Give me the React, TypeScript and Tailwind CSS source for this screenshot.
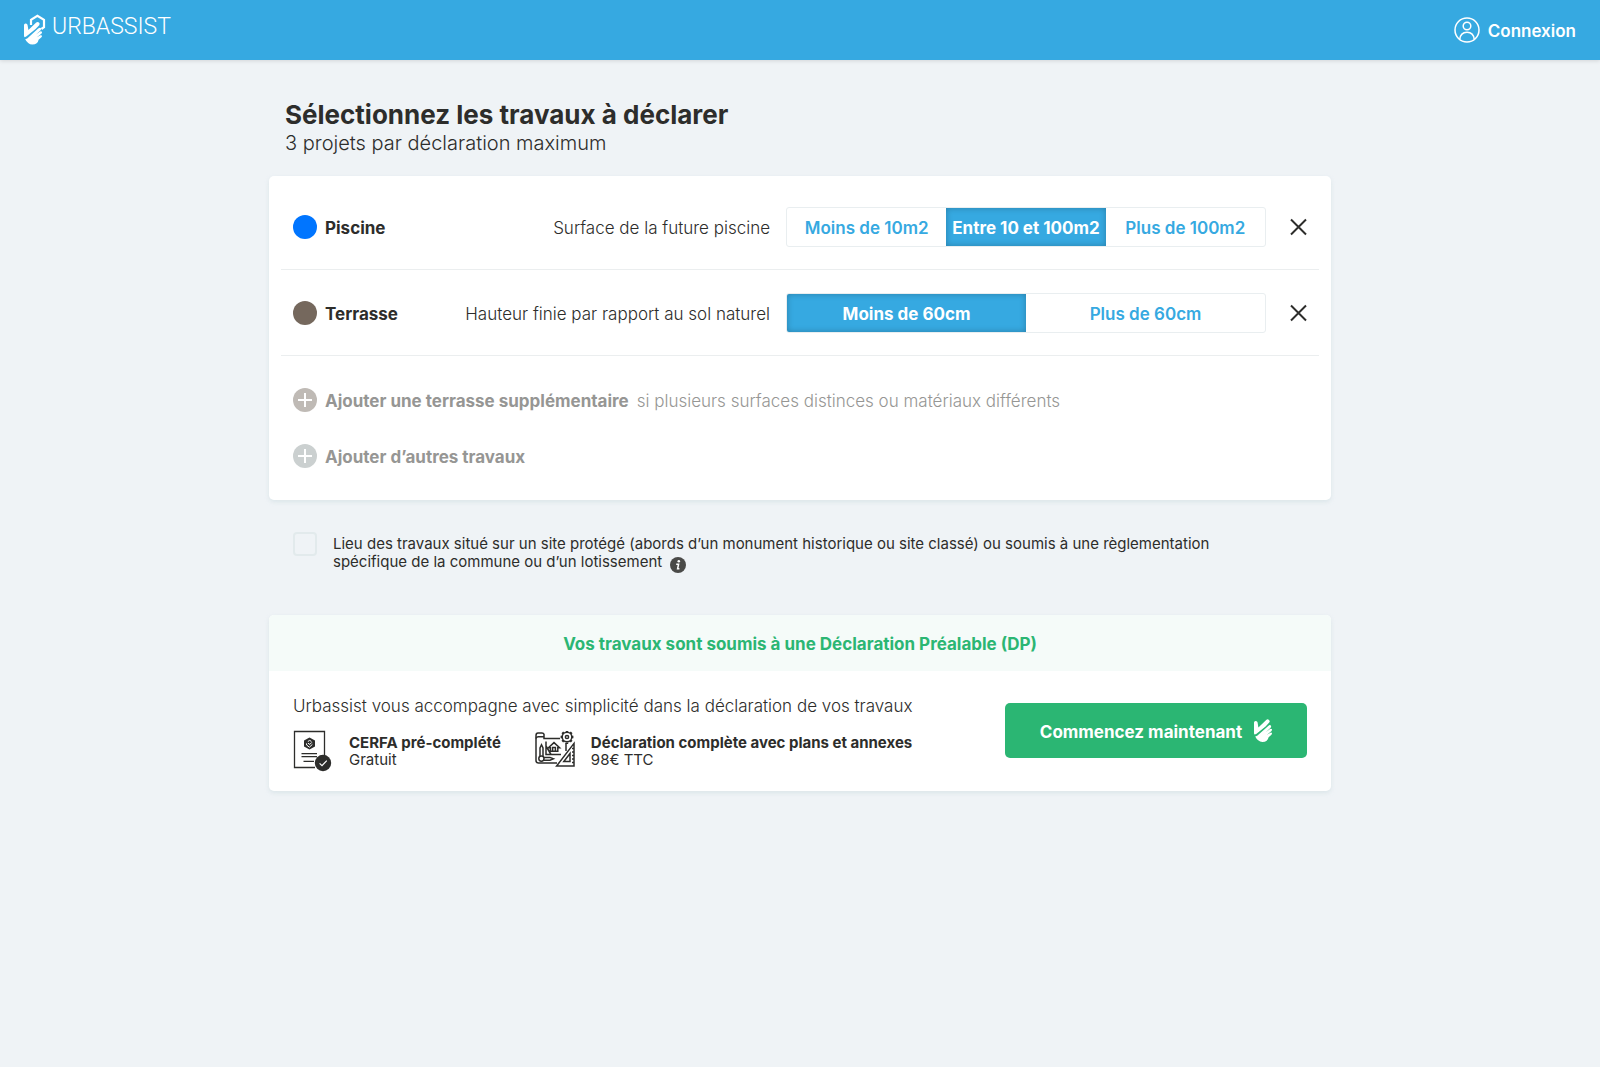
import React, { useState } from 'react';

type Project = {
  name: string;
  color: string;
  question: string;
  options: string[];
};

const PROJECTS: Project[] = [
  {
    name: 'Piscine',
    color: 'bg-[#0075ff]',
    question: 'Surface de la future piscine',
    options: ['Moins de 10m2', 'Entre 10 et 100m2', 'Plus de 100m2'],
  },
  {
    name: 'Terrasse',
    color: 'bg-[#75685d]',
    question: 'Hauteur finie par rapport au sol naturel',
    options: ['Moins de 60cm', 'Plus de 60cm'],
  },
];

const HandShape: React.FC = () => (
  <>
    <path d="M0 3.4Q0 1.8 1.8 1.9Q3.4 2 3.6 3.6L4.4 8.4L12.2.9Q13.6-.3 15 .9Q16.3 2.3 15.2 3.6L11.6 7.4L2.2 15L.6 15.6Q0 15 0 14Z" />
    <path d="M1.2 17.6L3.2 16.8L14.2 7Q15.8 5.5 16.8 6.5Q17.6 7.5 16.6 8.7L12 13L16 9.9Q17.4 9.2 18 10.3Q18.2 11.4 17.3 12.2L12.6 16L16.4 13.7Q17.6 13.3 18 14.2Q18.1 15.2 17.2 16L14.6 18.2Q13.8 22.8 8.4 23Q3.6 22.6 1.2 17.6Z" />
  </>
);

const LogoMark: React.FC = () => (
  <svg width="22" height="31" viewBox="0 0 22 31" fill="white" aria-hidden="true">
    <path d="M7 11V5.8L13.4 1.8L20 5.8V13.2L17.4 15" fill="none" stroke="white" strokeWidth="2.2" />
    <g transform="translate(0 7.6)">
      <HandShape />
    </g>
  </svg>
);

const UserIcon: React.FC = () => (
  <svg width="26" height="26" viewBox="0 0 26 26" fill="none" stroke="white" strokeWidth="1.5" aria-hidden="true">
    <circle cx="13" cy="13" r="12" />
    <circle cx="13" cy="9" r="3.8" />
    <path d="M5.8 22.4C6.2 17.6 9 15.2 13 15.2S19.8 17.6 20.2 22.4" />
  </svg>
);

const PlusCircle: React.FC<{ color: string }> = ({ color }) => (
  <svg width="24" height="24" viewBox="0 0 24 24" className={`shrink-0 ${color}`} aria-hidden="true">
    <circle cx="12" cy="12" r="12" fill="currentColor" />
    <path d="M12 5V19M5 12H19" stroke="white" strokeWidth="2" />
  </svg>
);

const CerfaIcon: React.FC = () => (
  <svg width="40" height="42" viewBox="0 0 40 42" fill="none" stroke="#2d2d2b" className="shrink-0" aria-hidden="true">
    <path d="M31.5 25V1.5H1.5V37.5H22" strokeWidth="1.3" />
    <path d="M16.5 7.5L22 10.4V16.4L16.5 19.5L11 16.4V10.4Z" fill="#2d2d2b" stroke="none" />
    <path d="M13.6 13.4V15L16.4 17.2L19.4 14.4M15 13.2L16.8 14.4L18.8 12.4M14.8 11.6L16.6 10.4L18.4 11.4" stroke="white" strokeWidth="1" />
    <path d="M8.5 23.6H24M8.5 26.6H24M10.5 31.4H21" strokeWidth="1.3" />
    <circle cx="30" cy="33" r="8.2" fill="#2d2d2b" stroke="none" />
    <path d="M26.6 33.4L29 35.6L33.8 30.6" stroke="white" strokeWidth="1.2" />
  </svg>
);

const PlansIcon: React.FC = () => (
  <svg width="40" height="38" viewBox="0 0 40 38" fill="none" stroke="#2d2d2b" strokeWidth="1.5" className="shrink-0" aria-hidden="true">
    <path d="M25 8.5H9V4.2Q8.6 3 7 3H3Q1 3 1 5.4V30.6Q1 33 3.4 33H22" />
    <path d="M1 8.5Q1.4 6.8 3.4 6.8H9M31 13V21" />
    <path d="M32 2.6V1M32 12.4V14M27 7H25.6M38.4 7H37M28.4 3.4L27.3 2.3M35.6 3.4L36.7 2.3M28.4 10.6L27.3 11.7M35.6 10.6L36.7 11.7" strokeWidth="2.4" />
    <circle cx="32" cy="7" r="4.8" />
    <circle cx="32" cy="7" r="1.6" />
    <path d="M39 13.4V36H21.6Z" />
    <path d="M35 23.5V31.6H28.8ZM39 18.5H37M39 22H37M39 25.5H37M39 29H37M39 32.5H37" />
    <path d="M13.4 17.8L19 12.6L24.6 17.8H22.8V21.2H15.4V17.8ZM17.6 21V17.6H20.4V21M11 11.5V24.5H26M11 16L16 24.5" />
    <path d="M5 26V18L6.5 14.8L8 18V26M9 27.4H15L18.4 28.8L15 30.2H9" />
    <circle cx="6.4" cy="28.6" r="2.6" />
  </svg>
);

const ProjectRow: React.FC<{
  project: Project;
  selected: number;
  onSelect: (index: number) => void;
}> = ({ project, selected, onSelect }) => (
  <div className="mx-3 flex items-center border-b border-[#ebeeef] px-3 pt-[23px] pb-[22px]">
    <span className={`size-6 shrink-0 rounded-full ${project.color}`} />
    <span className="ml-2 pt-0.5 text-[17px] leading-6 font-bold">{project.name}</span>
    <span className="ml-auto pt-0.5 pl-4 text-right text-[17px] leading-6 font-light">{project.question}</span>
    <div
      role="group"
      aria-label={project.question}
      className="ml-4 flex h-10 w-[480px] shrink-0 overflow-hidden rounded-[3px] border border-[#e9eef0]"
    >
      {project.options.map((option, i) => (
        <button
          key={option}
          type="button"
          aria-pressed={selected === i}
          onClick={() => onSelect(i)}
          className={`flex-1 basis-0 pt-0.5 text-[17px] leading-6 whitespace-nowrap ${
            selected === i
              ? 'bg-[#36a9e1] font-bold text-white shadow-[inset_0_0_6px_rgba(0,0,0,0.25)]'
              : 'font-semibold text-[#36a9e1]'
          }`}
        >
          {option}
        </button>
      ))}
    </div>
    <button type="button" aria-label={`Supprimer ${project.name}`} className="ml-6 shrink-0">
      <svg width="17" height="18" viewBox="0 0 17 18" stroke="#2d2d2b" strokeWidth="2" aria-hidden="true">
        <path d="M1 1.5L16 16.5M16 1.5L1 16.5" />
      </svg>
    </button>
  </div>
);

const App: React.FC = () => {
  const [choices, setChoices] = useState<number[]>([1, 0]);
  const [isProtected, setIsProtected] = useState(false);

  return (
    <div className="min-h-screen bg-[#eff3f6] font-['Inter',sans-serif] text-[#2d2d2b]">
      <header className="flex h-[60px] items-center justify-between bg-[#36a9e1] px-6 shadow-[0_1px_4px_rgba(0,0,0,0.12)]">
        <a href="#" className="flex items-center gap-[6px] pb-0.5 text-white">
          <LogoMark />
          <span className="pb-1 font-['Roboto',sans-serif] text-[23px] leading-7 font-light">URBASSIST</span>
        </a>
        <a href="#" className="flex items-center gap-2 text-[17px] leading-6 font-semibold text-white">
          <UserIcon />
          <span className="pt-0.5">Connexion</span>
        </a>
      </header>

      <main className="mx-auto max-w-[1062px] pt-10 pb-10">
        <div className="px-4">
          <h1 className="text-[26px] leading-[30px] font-bold">Sélectionnez les travaux à déclarer</h1>
          <p className="text-[20px] leading-[26px] font-light">3 projets par déclaration maximum</p>
        </div>

        <section className="mt-5 rounded-[5px] bg-white pt-2 pb-4 shadow-[0_2px_4px_rgba(190,210,216,0.4)]">
          {PROJECTS.map((project, i) => (
            <ProjectRow
              key={project.name}
              project={project}
              selected={choices[i]}
              onSelect={(index) => setChoices(prev => prev.map((c, j) => (j === i ? index : c)))}
            />
          ))}
          <div className="flex flex-col items-start gap-8 px-6 pt-8 pb-4 text-[17px] leading-6 text-[#969694]">
            <button type="button" className="flex h-6 items-center">
              <PlusCircle color="text-[#bfbab5]" />
              <span className="ml-2 pt-0.5 font-bold">Ajouter une terrasse supplémentaire</span>
              <span className="ml-2 pt-0.5 font-light">si plusieurs surfaces distinces ou matériaux différents</span>
            </button>
            <button type="button" className="flex h-6 items-center">
              <PlusCircle color="text-[#cbd0d0]" />
              <span className="ml-2 pt-0.5 font-bold">Ajouter d’autres travaux</span>
            </button>
          </div>
        </section>

        <div className="mt-8 flex items-start gap-4 px-6">
          <input
            id="site-protege"
            type="checkbox"
            checked={isProtected}
            onChange={(e) => setIsProtected(e.target.checked)}
            className="size-6 shrink-0 appearance-none rounded-[4px] border-2 border-[#e2eaec] checked:bg-[#36a9e1]"
          />
          <label htmlFor="site-protege" className="max-w-[900px] pt-[3px] text-[15px] leading-[18px]">
            Lieu des travaux situé sur un site protégé (abords d’un monument historique ou site classé) ou soumis à une règlementation
            spécifique de la commune ou d’un lotissement
            <svg width="16" height="16" viewBox="0 0 16 16" className="ml-2 inline-block align-[-6px]" aria-hidden="true">
              <circle cx="8" cy="8" r="8" fill="#4a4a48" />
              <circle cx="8.8" cy="4.2" r="1.3" fill="white" />
              <path d="M6.2 7.2H8.6L7.6 11.8H9.4" fill="none" stroke="white" strokeWidth="1.5" />
            </svg>
          </label>
        </div>

        <section className="mt-[42px] overflow-hidden rounded-[5px] bg-white shadow-[0_2px_4px_rgba(190,210,216,0.4)]">
          <h2 className="bg-[#f5fbf9] pt-[17px] pb-[15px] text-center text-[17px] leading-6 font-bold text-[#2bb673]">
            Vos travaux sont soumis à une Déclaration Préalable (DP)
          </h2>
          <div className="flex items-start justify-between px-6 pt-[23px] pb-[19px]">
            <div>
              <p className="text-[17px] leading-6 font-light">
                Urbassist vous accompagne avec simplicité dans la déclaration de vos travaux
              </p>
              <div className="mt-3 flex gap-[34px]">
                <div className="flex gap-4">
                  <CerfaIcon />
                  <div className="pt-1 text-[15px] leading-[17px]">
                    <p className="font-bold">CERFA pré-complété</p>
                    <p>Gratuit</p>
                  </div>
                </div>
                <div className="flex gap-4">
                  <PlansIcon />
                  <div className="pt-1 text-[15px] leading-[17px]">
                    <p className="font-bold">Déclaration complète avec plans et annexes</p>
                    <p>98€ TTC</p>
                  </div>
                </div>
              </div>
            </div>
            <button
              type="button"
              className="mt-[9px] flex h-[55px] w-[302px] shrink-0 items-center justify-center gap-3 rounded-[5px] bg-[#2bb673] text-[17px] leading-6 font-bold text-white"
            >
              <span className="pt-0.5">Commencez maintenant</span>
              <svg width="18" height="23" viewBox="0 0 18 23" fill="currentColor" aria-hidden="true">
                <HandShape />
              </svg>
            </button>
          </div>
        </section>
      </main>
    </div>
  );
};

export default App;
